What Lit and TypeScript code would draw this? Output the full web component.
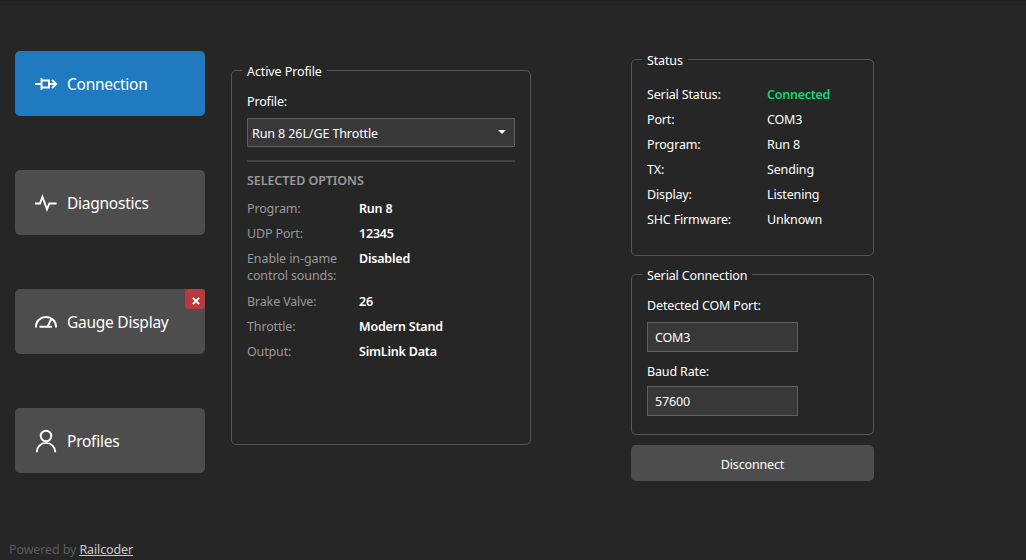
import { LitElement, html, css, svg } from "lit";
import { customElement } from "lit/decorators.js";
import { classMap } from "lit/directives/class-map.js";

const icons = {
  plug: svg`<path d="M1 12h6M7.5 6.3v11.4M7.5 8.5h7.5v7H7.5M15 12h7.5M18 7.8l4.2 4.2-4.2 4.2"/>`,
  pulse: svg`<path d="M1 12.5h5l2.4-6.8 4.6 12.6 2.4-5.8h7.2"/>`,
  gauge: svg`<path d="M2 17.6v-1.2a10 9.4 0 0 1 20 0v1.2M5.5 16.8h12.5M13.5 16.8L17.2 9"/>`,
  person: svg`<circle cx="12" cy="7" r="5.3"/><path d="M2.7 23.2a9.3 9.3 0 0 1 18.6 0"/>`,
};

const nav = [
  { label: "Connection", icon: icons.plug, active: true },
  { label: "Diagnostics", icon: icons.pulse },
  { label: "Gauge Display", icon: icons.gauge, closable: true },
  { label: "Profiles", icon: icons.person },
];

const options = [
  ["Program:", "Run 8"],
  ["UDP Port:", "12345"],
  ["Enable in-game control sounds:", "Disabled"],
  ["Brake Valve:", "26"],
  ["Throttle:", "Modern Stand"],
  ["Output:", "SimLink Data"],
];

const status = [
  ["Serial Status:", "Connected"],
  ["Port:", "COM3"],
  ["Program:", "Run 8"],
  ["TX:", "Sending"],
  ["Display:", "Listening"],
  ["SHC Firmware:", "Unknown"],
];

@customElement("app-root")
export class AppRoot extends LitElement {
  static styles = css`
    :host {
      display: flex;
      flex-direction: column;
      box-sizing: border-box;
      width: 1026px;
      height: 560px;
      overflow: hidden;
      background: #262626;
      border-top: 1px solid #202020;
      color: #fff;
      font: 12.5px/17px "Noto Sans", "Open Sans", sans-serif;
      letter-spacing: -0.15px;
    }
    * { box-sizing: border-box; }
    .main { display: flex; align-items: flex-start; height: 538px; padding-left: 15px; }
    .nav { display: flex; flex-direction: column; gap: 54px; width: 190px; margin-top: 50px; }
    .item {
      position: relative;
      display: flex;
      align-items: center;
      gap: 9px;
      height: 65px;
      padding: 0 0 0 19px;
      border: 0;
      border-radius: 5px;
      background: #4d4d4d;
      color: #fff;
      font: 15.5px/22px "Noto Sans", "Open Sans", sans-serif;
      letter-spacing: -0.25px;
    }
    .item.active { background: #207ac0; }
    .item svg { width: 24px; height: 24px; flex: none; fill: none; stroke: #fff; stroke-width: 1.9; }
    .close {
      position: absolute;
      top: 0;
      right: 0;
      display: flex;
      align-items: center;
      justify-content: center;
      width: 20px;
      height: 20px;
      padding: 3px 0 0 1px;
      border-radius: 3px;
      background: #b83a3e;
    }
    .item .close svg { width: 8px; height: 8px; stroke-width: 1.9; }
    .panel { border: 1px solid #565656; border-radius: 5px; padding: 0 15px; }
    .title {
      display: block;
      width: fit-content;
      margin: -8px 0 0 -5px;
      padding: 0 5px;
      background: #262626;
    }
    .profile { width: 300px; height: 375px; margin: 69px 0 0 26px; }
    .profile .title, .select { letter-spacing: -0.1px; }
    .profile .label { margin-top: 13px; }
    .select {
      display: flex;
      align-items: center;
      justify-content: space-between;
      height: 29px;
      margin-top: 8px;
      padding: 1px 8px 0 4px;
      border: 1px solid #606060;
      border-radius: 1px;
      background: #383838;
    }
    .select svg { width: 8px; height: 4px; margin-top: -2px; fill: #fff; }
    .rule { height: 2px; margin-top: 13px; background: #444; }
    .heading { margin-top: 10px; color: #999; font-weight: 600; letter-spacing: -0.08px; }
    .options { display: grid; grid-template-columns: 98px 1fr; column-gap: 14px; row-gap: 8px; margin-top: 11px; }
    .options .key { color: #999; }
    .options .tall { height: 35px; letter-spacing: -0.1px; }
    .options .val { font-weight: 600; letter-spacing: -0.2px; }
    .side { width: 243px; margin: 58px 0 0 100px; }
    .status { height: 197px; }
    .rows { display: grid; grid-template-columns: 120px 1fr; row-gap: 8px; margin-top: 17px; }
    .ok { color: #09d876; font-weight: 600; letter-spacing: -0.25px; }
    .serial { height: 161px; margin-top: 18px; }
    .serial .label { margin-top: 13px; }
    .serial .baud { margin-top: 11px; }
    .field {
      display: flex;
      align-items: center;
      width: 151px;
      height: 30px;
      margin-top: 8px;
      padding: 0 7px;
      border: 1px solid #606060;
      background: #383838;
    }
    .baud + .field { margin-top: 6px; }
    .disconnect {
      display: flex;
      align-items: center;
      justify-content: center;
      width: 100%;
      height: 36px;
      margin-top: 10px;
      padding-top: 4px;
      border: 0;
      border-radius: 5px;
      background: #4d4d4d;
      color: inherit;
      font: inherit;
      letter-spacing: inherit;
    }
    .footer { padding: 2px 0 0 9px; color: #5c5c5c; letter-spacing: -0.12px; }
    .footer a { color: #ccc; text-decoration: underline; }
  `;

  render() {
    return html`
      <div class="main">
        <nav class="nav">
          ${nav.map((n) => html`
            <button class=${classMap({ item: true, active: !!n.active })}>
              <svg viewBox="0 0 24 24">${n.icon}</svg>
              <span>${n.label}</span>
              ${n.closable ? html`<span class="close"><svg viewBox="0 0 8 8"><path d="M.9.9l6.2 6.2M7.1.9L.9 7.1"/></svg></span>` : null}
            </button>`)}
        </nav>
        <section class="panel profile">
          <span class="title">Active Profile</span>
          <div class="label">Profile:</div>
          <div class="select"><span>Run 8 26L/GE Throttle</span><svg viewBox="0 0 8 4"><path d="M0 0h8L4 4z"/></svg></div>
          <div class="rule"></div>
          <div class="heading">SELECTED OPTIONS</div>
          <div class="options">
            ${options.map(([k, v]) => html`<span class=${classMap({ key: true, tall: k.length > 20 })}>${k}</span><span class="val">${v}</span>`)}
          </div>
        </section>
        <div class="side">
          <section class="panel status">
            <span class="title">Status</span>
            <div class="rows">
              ${status.map(([k, v]) => html`<span>${k}</span><span class=${classMap({ ok: v === "Connected" })}>${v}</span>`)}
            </div>
          </section>
          <section class="panel serial">
            <span class="title">Serial Connection</span>
            <div class="label">Detected COM Port:</div>
            <div class="field">COM3</div>
            <div class="label baud">Baud Rate:</div>
            <div class="field">57600</div>
          </section>
          <button class="disconnect">Disconnect</button>
        </div>
      </div>
      <div class="footer">Powered by <a>Railcoder</a></div>
    `;
  }
}
